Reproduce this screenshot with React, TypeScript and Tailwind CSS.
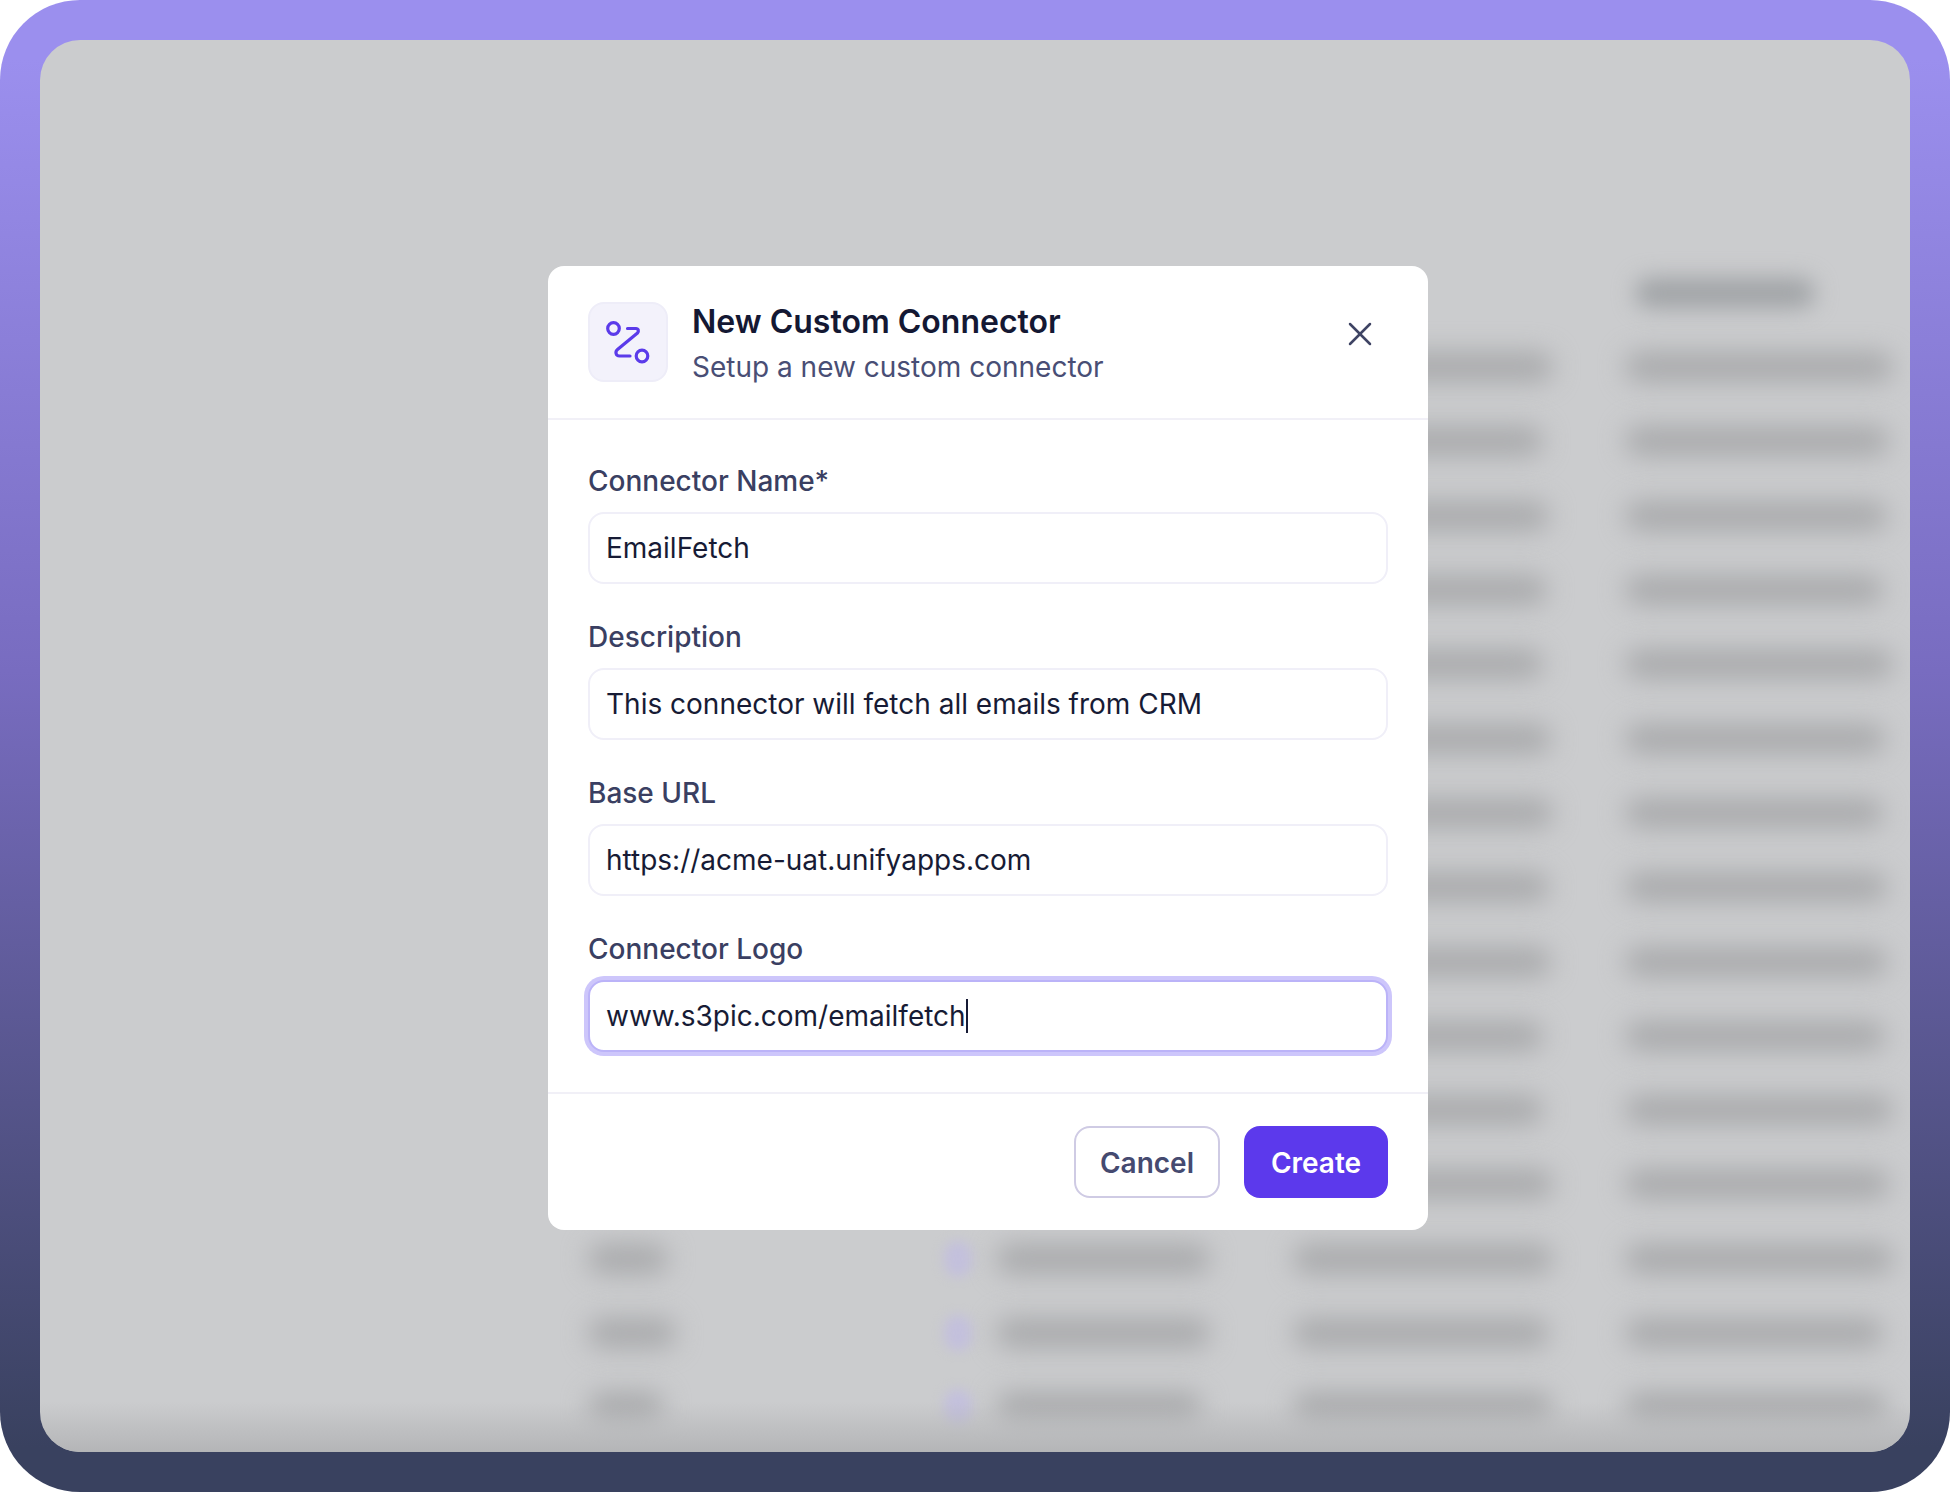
import React from "react";

const rows: [number, number, number, number][] = [
  [0, 0, 260, 268], [0, 0, 250, 264], [0, 0, 256, 262], [0, 0, 254, 258],
  [0, 0, 250, 268], [0, 0, 258, 260], [0, 0, 260, 258], [0, 0, 256, 262],
  [0, 0, 258, 262], [0, 0, 250, 260], [0, 0, 250, 268], [0, 0, 260, 264],
  [80, 214, 260, 268], [88, 214, 256, 258], [76, 206, 260, 262],
];

function Bar({ w, dark }: { w: number; dark?: boolean }) {
  if (!w) return <div />;
  return (
    <div
      className={`rounded-full ${dark ? "h-[30px] bg-[#a0a3a6] blur-[11px]" : "h-[30px] bg-[#a9aaac] blur-[13px]"}`}
      style={{ width: w }}
    />
  );
}

function Field({ label, value, focused }: { label: string; value: string; focused?: boolean }) {
  return (
    <div className="flex flex-col gap-3">
      <div className="h-10 text-[28px] leading-[42px] font-medium text-[#3a3f62]">{label}</div>
      <div
        className={
          focused
            ? "flex h-[72px] items-center rounded-2xl border-2 border-[#bbb3f8] bg-white px-4 text-[28px] text-[#171b35] shadow-[0_0_0_4px_#cdc6fb]"
            : "flex h-[72px] items-center rounded-2xl border-2 border-[#f0eff8] bg-white px-4 text-[28px] text-[#171b35]"
        }
      >
        <span>{value}</span>
        {focused && <span className="h-[34px] w-[2px] bg-[#171b35]" />}
      </div>
    </div>
  );
}

export default function App() {
  return (
    <div className="h-[1492px] w-[1950px] overflow-hidden bg-white font-['Inter',sans-serif]">
      <div className="flex h-full w-full rounded-[80px] bg-[linear-gradient(180deg,#9b8fee_4%,#786cc0_45%,#39415f_97%)] p-10">
        <div className="relative flex-1 overflow-hidden rounded-[40px] bg-[#cbccce]">
          <div className="flex flex-col pt-[216px] pl-[548px]">
            <div className="grid h-[74px] grid-cols-[362px_350px_325px_265px] items-center">
              <div />
              <div />
              <div />
              <div className="pl-[10px]"><Bar w={180} dark /></div>
            </div>
            {rows.map((r, i) => (
              <div key={i} className="grid h-[74.3px] grid-cols-[356px_52px_297px_332px_265px] items-center">
                <Bar w={r[0]} />
                {r[1] ? <div className="h-9 w-7 rounded-full bg-[#c3c0dc] blur-[6px]" /> : <div />}
                <Bar w={r[1]} />
                <Bar w={r[2]} />
                <Bar w={r[3]} />
              </div>
            ))}
          </div>
          <div className="absolute bottom-0 left-0 right-0 h-[50px] bg-gradient-to-b from-transparent to-[#b4b5b7]" />
          <div className="absolute left-[508px] top-[226px] flex w-[880px] flex-col overflow-hidden rounded-2xl bg-white">
            <div className="flex items-start border-b-2 border-[#f1f0f7] px-10 py-9">
              <div className="flex h-20 w-20 shrink-0 items-center justify-center rounded-2xl border-2 border-[#eeedf8] bg-[#f3f2fb]">
                <svg width="48" height="48" viewBox="0 0 48 48" fill="none" stroke="#5b3bea" strokeWidth="3.2" strokeLinecap="round" strokeLinejoin="round">
                  <circle cx="9.5" cy="10.5" r="5.8" />
                  <circle cx="38" cy="38" r="5.8" />
                  <path d="M23.5 10.5h8.5c2.5 0 3 2.5 1.5 4.5L13.5 31.5c-2.5 2-2 6.5 2 6.5H26" />
                </svg>
              </div>
              <div className="ml-6 flex h-20 flex-1 flex-col">
                <div className="text-[32px] leading-10 font-semibold text-[#141833]">New Custom Connector</div>
                <div className="mt-[9px] text-[28px] leading-8 text-[#494e75]">Setup a new custom connector</div>
              </div>
              <svg className="mt-3 mr-2" width="40" height="40" viewBox="0 0 24 24" fill="none" stroke="#3f4464" strokeWidth="1.5" strokeLinecap="round">
                <path d="M18 6 6 18" />
                <path d="m6 6 12 12" />
              </svg>
            </div>
            <div className="flex flex-col gap-8 px-10 py-10">
              <Field label="Connector Name*" value="EmailFetch" />
              <Field label="Description" value="This connector will fetch all emails from CRM" />
              <Field label="Base URL" value="https://acme-uat.unifyapps.com" />
              <Field label="Connector Logo" value="www.s3pic.com/emailfetch" focused />
            </div>
            <div className="flex justify-end gap-6 border-t-2 border-[#f1f0f7] p-8 pr-10">
              <button className="flex h-[72px] w-[146px] items-center justify-center rounded-2xl border-2 border-[#cfcbe4] bg-white pt-[1px] text-[28px] font-semibold text-[#454a70]">Cancel</button>
              <button className="flex h-[72px] w-36 items-center justify-center rounded-2xl bg-[#5c39ec] pt-[1px] text-[28px] font-semibold text-white">Create</button>
            </div>
          </div>
        </div>
      </div>
    </div>
  );
}
